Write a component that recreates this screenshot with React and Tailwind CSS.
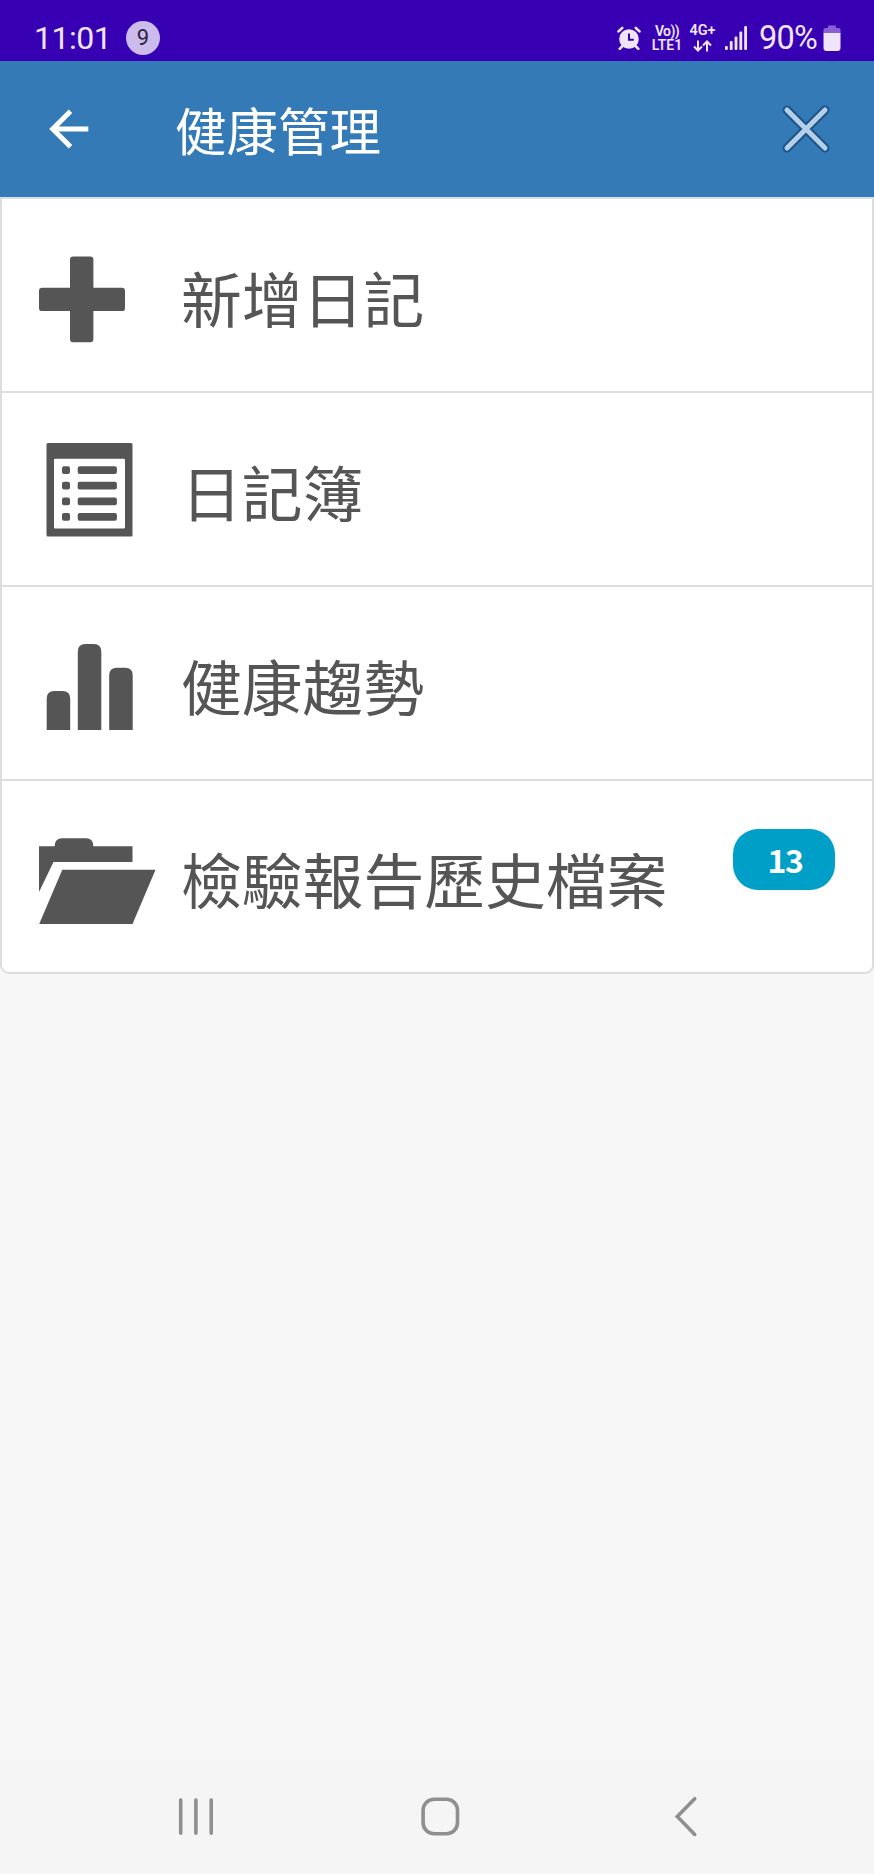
const CJK = "font-['Noto_Sans_CJK_TC',sans-serif]";

function StatusBar() {
  return (
    <div className="flex h-[61px] shrink-0 items-start bg-[#3700b3] pl-[34px] pr-[33px] font-[Roboto,sans-serif] text-[#f0e4fb]">
      <span className="mt-[20px] w-[76px] text-[32px] leading-[36px] tracking-[-0.5px]">11:01</span>
      <span className="ml-[16px] mt-[21px] flex size-[34px] items-center justify-center rounded-full bg-[#cbbcec] text-[22px] leading-none text-[#2c2440]">
        9
      </span>
      <div className="flex-1" />
      <svg className="mt-[26px] h-[24px] w-[24px]" viewBox="0 0 24 24" fill="currentColor">
        <circle cx="12" cy="13" r="9.800" />
        <path d="M5.500 20l-2.800 2.800M18.500 20l2.800 2.800M1.500 5.400L5.200 2M22.500 5.400L18.800 2" stroke="currentColor" strokeWidth="2.600" strokeLinecap="round" />
        <path d="M12 7.500v6.200h4.800" fill="none" stroke="#3700b3" strokeWidth="2" />
      </svg>
      <div className="ml-[10px] mt-[24px] flex w-[32px] flex-col items-center text-[14px] font-semibold">
        <span className="h-[14px] whitespace-nowrap leading-[14px] tracking-[-0.6px]">Vo))</span>
        <span className="h-[14px] whitespace-nowrap leading-[14px]">LTE1</span>
      </div>
      <div className="ml-[6px] mt-[24px] flex w-[27px] flex-col items-center text-[14.500px] font-semibold">
        <span className="h-[14px] whitespace-nowrap leading-[14px]">4G+</span>
        <svg className="mt-[2px] h-[12px] w-[19px]" viewBox="0 0 19 12" fill="none" stroke="currentColor" strokeWidth="2">
          <path d="M5 0.500v10M1 6.500l4 4 4-4M14 11.500v-10M10 5.500l4-4 4 4" />
        </svg>
      </div>
      <svg className="ml-[9px] mt-[26px] h-[24px] w-[22px]" viewBox="0 0 22 24" fill="currentColor">
        <rect x="0" y="20" width="2.800" height="4" rx="1" />
        <rect x="4.800" y="15" width="2.800" height="9" rx="1" />
        <rect x="9.600" y="10.500" width="2.800" height="13.500" rx="1" />
        <rect x="14.400" y="5.500" width="2.800" height="18.500" rx="1" />
        <rect x="19.200" y="0" width="2.800" height="24" rx="1" />
      </svg>
      <span className="ml-[12px] mt-[20px] w-[59px] text-[32.500px] leading-[36px] tracking-[-0.8px]">90%</span>
      <svg className="ml-[5px] mt-[25px] h-[26px] w-[18px]" viewBox="0 0 18 26">
        <path d="M5 3V1.500Q5 .5 6 .5h6q1 0 1 1V3h2.500Q17.500 3 17.500 5V9H.5V5Q.5 3 2.500 3z" fill="#8a5fd3" />
        <path d="M.5 8h17v15q0 3-3 3h-11q-3 0-3-3z" fill="currentColor" />
      </svg>
    </div>
  );
}

function Header() {
  return (
    <header className="flex h-[136px] shrink-0 items-center bg-[#337ab7] pl-[49px] pr-[44px] text-white">
      <svg className="h-[40px] w-[40px]" viewBox="49 109 40 40" fill="none" stroke="currentColor" strokeWidth="5">
        <path d="M88.300 129H52M70.500 111.200L52.700 129l17.800 17.800" />
      </svg>
      <h1 className={`ml-[86px] flex-1 text-[51.500px] leading-[60px] ${CJK}`}>健康管理</h1>
      <svg className="-mt-[1px] size-[48px]" viewBox="782 104.500 48 48" fill="none" strokeLinecap="round">
        <path d="M787 109.500l38 38M825 109.500l-38 38" stroke="#1f5488" strokeWidth="9" />
        <path d="M787 109.500l38 38M825 109.500l-38 38" stroke="#b4cfe8" strokeWidth="5" />
      </svg>
    </header>
  );
}

function PlusIcon() {
  return (
    <svg className="h-[192px] w-[142px] shrink-0" viewBox="39 199 142 192" fill="#555">
      <rect x="70" y="256.500" width="23.400" height="85.700" rx="3.200" />
      <rect x="39" y="287.700" width="86" height="23.400" rx="3.200" />
    </svg>
  );
}

function NotebookIcon() {
  return (
    <svg className="h-[192px] w-[142px] shrink-0" viewBox="39 393 142 192" fill="#555">
      <path fillRule="evenodd" d="M48 443h83q1.500 0 1.500 1.500v90.500q0 1.500-1.500 1.500H48q-1.500 0-1.500-1.500V444.500q0-1.500 1.500-1.500zM55.300 458.700q-1.300 0-1.300 1.300v67.300q0 1.300 1.300 1.300h68.400q1.300 0 1.300-1.300V460q0-1.300-1.300-1.300z" />
      <rect x="62" y="466.300" width="8" height="7.800" rx="2" />
      <rect x="62" y="481.800" width="8" height="7.800" rx="2" />
      <rect x="62" y="497.400" width="8" height="7.800" rx="2" />
      <rect x="62" y="513" width="8" height="7.800" rx="2" />
      <rect x="77.700" y="466.300" width="39.200" height="7.800" rx="2" />
      <rect x="77.700" y="481.800" width="39.200" height="7.800" rx="2" />
      <rect x="77.700" y="497.400" width="39.200" height="7.800" rx="2" />
      <rect x="77.700" y="513" width="39.200" height="7.800" rx="2" />
    </svg>
  );
}

function ChartIcon() {
  return (
    <svg className="h-[192px] w-[142px] shrink-0" viewBox="39 587 142 192" fill="#555">
      <path d="M46.700 730V698.500q0-7.500 7.500-7.500h8.500q7.500 0 7.500 7.500V730z" />
      <path d="M77.800 730V651.500q0-7.500 7.500-7.500h8.500q7.500 0 7.500 7.500V730z" />
      <path d="M109.200 730V675.300q0-7.500 7.500-7.500h8.500q7.500 0 7.500 7.500V730z" />
    </svg>
  );
}

function FolderIcon() {
  return (
    <svg className="h-[191px] w-[142px] shrink-0" viewBox="39 781 142 191" fill="#555">
      <path d="M39 846.300H54.700q0-8 7.500-8H86q7.300 0 7.300 8H132.500V862H53.500L39 892z" />
      <path d="M62.300 869.700H155.500L132.500 924H39.200z" />
    </svg>
  );
}

function Row({ icon, label, last, badge }) {
  return (
    <li
      className={`flex items-center overflow-hidden pl-[37px] ${
        last ? "h-[191px]" : "h-[194px] border-b-2 border-[#ddd]"
      }`}
    >
      {icon}
      <span className={`mt-[3px] flex-1 whitespace-nowrap text-[60.800px] leading-[80px] text-[#555] ${CJK}`}>{label}</span>
      {badge && (
        <span
          className={`mr-[37px] mt-[48px] flex h-[61px] w-[102px] items-center justify-center self-start rounded-[25px] bg-[#009fc7] pb-[2px] pl-[2px] text-[32px] font-bold leading-none tracking-[-1.500px] text-white ${CJK}`}
        >
          {badge}
        </span>
      )}
    </li>
  );
}

function NavBar() {
  return (
    <nav className="flex h-[114px] shrink-0 items-center bg-[#f5f5f5] pl-[176px]">
      <svg className="h-[50px] w-[40px]" viewBox="176 1792 40 50" stroke="#8f8f8f" strokeWidth="3.600" strokeLinecap="round">
        <path d="M180.700 1800v33.200M195.900 1800v33.200M211.200 1800v33.200" />
      </svg>
      <svg className="ml-[202px] h-[50px] w-[44px]" viewBox="418 1792 44 50" fill="none" stroke="#8f8f8f" strokeWidth="3.600">
        <rect x="423.100" y="1799.300" width="34.400" height="34.400" rx="11" />
      </svg>
      <svg className="ml-[211px] h-[50px] w-[28px]" viewBox="673 1792 28 50" fill="none" stroke="#8f8f8f" strokeWidth="3.600" strokeLinecap="round">
        <path d="M694.700 1798.700L677.300 1816.600l17.400 17.800" />
      </svg>
    </nav>
  );
}

export default function App() {
  return (
    <div className="flex h-[1874px] w-[874px] flex-col overflow-hidden bg-[#f7f7f7]">
      <StatusBar />
      <Header />
      <main className="flex-1">
        <ul className="rounded-b-[9px] border-2 border-[#ddd] bg-white">
          <Row icon={<PlusIcon />} label="新增日記" />
          <Row icon={<NotebookIcon />} label="日記簿" />
          <Row icon={<ChartIcon />} label="健康趨勢" />
          <Row icon={<FolderIcon />} label="檢驗報告歷史檔案" badge="13" last />
        </ul>
      </main>
      <NavBar />
    </div>
  );
}
